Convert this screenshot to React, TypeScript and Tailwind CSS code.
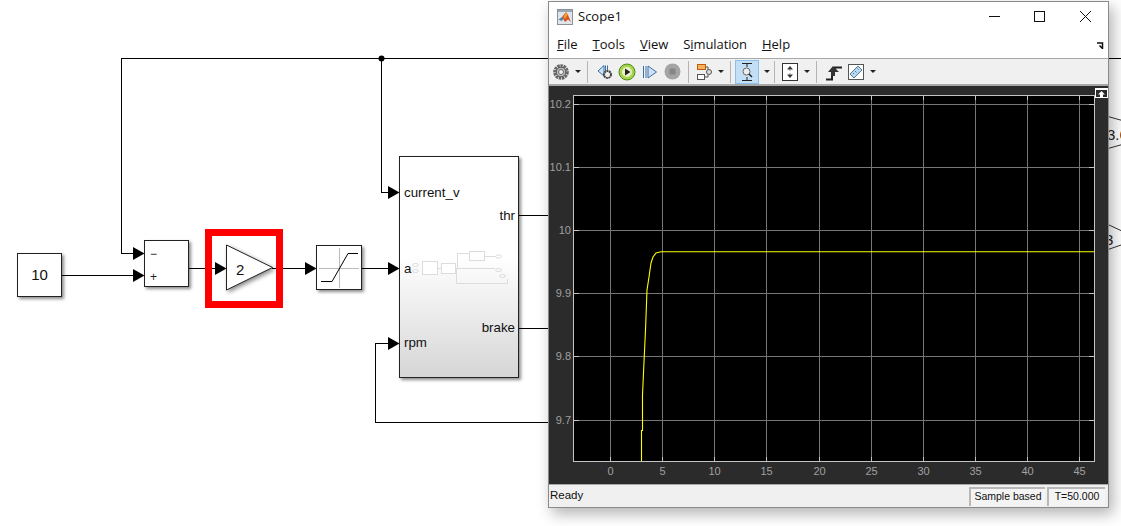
const sans = "font-['Liberation_Sans',Arial,sans-serif]";

const Arrow = ({ x, y }: { x: number; y: number }) => (
  <polygon points={`${x},${y - 6} ${x + 11.5},${y + 0.5} ${x},${y + 7}`} fill="#000" />
);

const Block = ({ className, children }: { className: string; children?: React.ReactNode }) => (
  <div
    className={`absolute border border-[#222] bg-white shadow-[2px_2px_3px_rgba(0,0,0,0.45)] ${sans} ${className}`}
  >
    {children}
  </div>
);

const Wires = () => (
  <svg className="absolute left-0 top-0" width={1121} height={526} fill="none">
    <g stroke="#000" strokeWidth={1} shapeRendering="crispEdges">
      <path d="M1121 58.5H121.5V253.5H134" />
      <path d="M381.5 58.5V192.5H389" />
      <path d="M62 275.5H134" />
      <path d="M189 268.5H216" />
      <path d="M272 268.5H306" />
      <path d="M362 268.5H389" />
      <path d="M519 215.5H548" />
      <path d="M519 328.5H548" />
      <path d="M548 422.5H375.5V343.5H389" />
    </g>
    <circle cx={381.5} cy={58.5} r={3} fill="#000" />
    <Arrow x={133} y={253} />
    <Arrow x={133} y={275} />
    <Arrow x={215} y={268} />
    <Arrow x={305} y={268} />
    <Arrow x={388} y={268} />
    <Arrow x={388} y={192} />
    <Arrow x={388} y={343} />
    <polygon
      points="226.5,245 272.5,267.5 226.5,290"
      fill="#fff"
      stroke="#222"
      style={{ filter: "drop-shadow(2px 2px 2px rgba(0,0,0,.45))" }}
    />
    <polygon points="1108,116.5 1124,121 1124,144 1108,148.5" fill="#fff" stroke="#333" />
    <polygon points="1108,224.5 1124,232 1124,244 1108,249.5" fill="#fff" stroke="#333" />
  </svg>
);

// drawn in page coordinates through the viewBox
const SubsystemThumb = () => (
  <svg className="absolute left-[10px] top-[90px]" width={100} height={40} viewBox="410 247 100 40" fill="none" stroke="#dcdcdc">
    <ellipse cx={415.5} cy={265} rx={3} ry={1.5} />
    <ellipse cx={415.5} cy={271} rx={3} ry={1.5} />
    <rect x={422.5} y={261.5} width={15} height={13} fill="#fff" />
    <path d="M437 268.5H441" />
    <rect x={441.5} y={263.5} width={14} height={10} fill="#fff" />
    <path d="M456 268.5H495M457.5 268V253.5H469M456.5 268V283.5H507.5V279" />
    <rect x={469.5} y={251.5} width={15} height={9} fill="#fff" />
    <path d="M485 256.5H495" />
    <ellipse cx={498.5} cy={256.5} rx={3} ry={1.5} />
    <ellipse cx={498.5} cy={270} rx={3} ry={1.5} />
    <ellipse cx={502.5} cy={276} rx={3} ry={1.5} />
  </svg>
);

const Diagram = () => (
  <>
    <Wires />
    <Block className="left-[17px] top-[253px] flex h-[44px] w-[45px] items-center justify-center text-[15px] text-[#111]">10</Block>
    <Block className="left-[144px] top-[240px] h-[47px] w-[45px] text-[12px] text-[#222]">
      <span className="absolute left-[5px] top-[4px]">−</span>
      <span className="absolute left-[5px] top-[27px]">+</span>
    </Block>
    <div className="absolute left-[205px] top-[229px] h-[79px] w-[78px] border-[7px] border-[#ff0000]" />
    <span className={`absolute left-[236px] top-[259px] text-[15px] text-[#111] ${sans}`}>2</span>
    <Block className="left-[316px] top-[245px] h-[45px] w-[46px]">
      <svg width={44} height={43} fill="none" className="absolute left-0 top-0">
        <path d="M22.5 2V42M2 22.5H42" stroke="#bbb" />
        <path d="M4 35.5H15L31 7.5H41" stroke="#000" />
      </svg>
    </Block>
    <div
      className={`absolute left-[399px] top-[156px] h-[222px] w-[120px] border border-[#222] bg-[linear-gradient(#fff_0%,#fff_45%,#d6d6d6_100%)] text-[13.33px] text-[#111] shadow-[2px_2px_3px_rgba(0,0,0,0.45)] ${sans}`}
    >
      <SubsystemThumb />
      <span className="absolute left-[4px] top-[26px]">current_v</span>
      <span className="absolute right-[3px] top-[49px]">thr</span>
      <span className="absolute left-[4px] top-[102px]">a</span>
      <span className="absolute right-[3px] top-[161px]">brake</span>
      <span className="absolute left-[4px] top-[176px]">rpm</span>
    </div>
    <span className={`absolute left-[1107px] top-[124px] text-[15px] text-[#222] ${sans}`}>3.6</span>
    <span className={`absolute left-[1105px] top-[229px] text-[15px] text-[#222] ${sans}`}>3</span>
  </>
);

const MatlabLogo = () => (
  <svg width={16} height={16} viewBox="0 0 16 16">
    <rect x={0.5} y={0.5} width={15} height={15} fill="#dfe5ea" stroke="#8a9199" />
    <rect x={1} y={1} width={14} height={2} fill="#9aa8b5" />
    <path d="M1.5 10.5L5 8L7 9.5L4.5 12Z" fill="#4a86b8" />
    <path d="M5 8L9 3L11 6L14 13L11 10.5L8 13Z" fill="#d9541e" />
    <path d="M9 3L10.5 6L8 10L6.5 8Z" fill="#f0a030" />
  </svg>
);

const ToolDivider = () => <div className="h-[22px] w-px shrink-0 bg-[#b4b4b4]" />;

const Caret = ({ w }: { w: string }) => (
  <div className={`flex shrink-0 justify-center ${w}`}>
    <svg width={6} height={3}>
      <path d="M0 0H6L3 3Z" fill="#222" />
    </svg>
  </div>
);

const Gear = () => (
  <svg width={16} height={16} viewBox="0 0 16 16" className="shrink-0">
    <circle cx={8} cy={8} r={6.2} fill="none" stroke="#666" strokeWidth={3.2} strokeDasharray="2.4 0.7" />
    <circle cx={8} cy={8} r={4.8} fill="#bdbdbd" stroke="#555" />
    <circle cx={8} cy={8} r={2.5} fill="#f0f0f0" stroke="#666" />
  </svg>
);

const Toolbar = () => (
  <div className="flex h-[27px] shrink-0 items-center border-b-2 border-[#a8a8a8] bg-[#f0f0f0] pl-[4px]">
    <Gear />
    <Caret w="w-[18px]" />
    <ToolDivider />
    <svg width={16} height={16} viewBox="0 0 16 16" className="ml-[9px] shrink-0" fill="none">
      <path d="M7 1.5L1 7L7 12Z" fill="#cfe2f5" stroke="#3b6ea8" />
      <path d="M8.5 1.5V7M10.5 1.5V7" stroke="#3b6ea8" />
      <circle cx={10.5} cy={10.5} r={3.5} fill="#eee" stroke="#444" strokeWidth={2} strokeDasharray="2 0.5" />
    </svg>
    <svg width={18} height={18} viewBox="0 0 18 18" className="ml-[5px] shrink-0">
      <circle cx={9} cy={9} r={8} fill="#a5d34a" stroke="#4f8a22" />
      <circle cx={9} cy={9} r={5} fill="#e8f3c4" />
      <path d="M7 5.5L12.5 9L7 12.5Z" fill="#222" />
    </svg>
    <svg width={14} height={16} viewBox="0 0 14 16" className="ml-[7px] shrink-0" fill="none">
      <path d="M0.5 2V14M3 2V14" stroke="#3b6ea8" />
      <path d="M5 2L13.5 8L5 14Z" fill="#cfe2f5" stroke="#3b6ea8" />
    </svg>
    <svg width={17} height={17} viewBox="0 0 17 17" className="ml-[7px] shrink-0">
      <circle cx={8.5} cy={8.5} r={8} fill="#a4a4a4" />
      <rect x={5.5} y={5.5} width={6} height={6} fill="#868686" />
    </svg>
    <div className="ml-[7px]"><ToolDivider /></div>
    <svg width={16} height={18} viewBox="0 0 16 18" className="ml-[7px] shrink-0" fill="none">
      <rect x={1.5} y={1.5} width={8} height={5} fill="#f5b25a" stroke="#c05a10" />
      <rect x={1.5} y={11.5} width={7} height={5} fill="#fff" stroke="#555" />
      <circle cx={13} cy={9} r={2.5} fill="#ddd" stroke="#555" />
      <path d="M9.5 4H12V6.5M8.5 14H12V11.5" stroke="#555" />
    </svg>
    <Caret w="w-[18px]" />
    <ToolDivider />
    <div className="ml-[4px] flex h-[24px] w-[24px] shrink-0 items-center justify-center border border-[#8cc0ea] bg-[#c3dff5]">
      <svg width={16} height={20} viewBox="0 0 16 20" fill="none" stroke="#222">
        <path d="M3 1.5H13M3 18.5H13M8 2V5M8 15V18" />
        <circle cx={7.5} cy={9.5} r={3.5} fill="#eee" stroke="#666" />
        <path d="M10 12L13 15" strokeWidth={1.5} />
      </svg>
    </div>
    <Caret w="w-[15px]" />
    <ToolDivider />
    <svg width={16} height={18} viewBox="0 0 16 18" className="ml-[7px] shrink-0" fill="none">
      <rect x={0.5} y={0.5} width={15} height={17} fill="#fff" stroke="#333" />
      <path d="M8 3L5 6.5H11ZM8 15L5 11.5H11Z" fill="#333" />
      <path d="M8 6.5V8M8 10V11.5" stroke="#888" />
    </svg>
    <Caret w="w-[18px]" />
    <ToolDivider />
    <svg width={16} height={18} viewBox="0 0 16 18" className="ml-[9px] shrink-0" fill="none">
      <path d="M0 16.5H6V7.5H9V4.5H16" stroke="#222" strokeWidth={2} />
      <path d="M2 9L7 3L13 9H9V13H5V9Z" fill="#333" />
    </svg>
    <svg width={16} height={16} viewBox="0 0 16 16" className="ml-[6px] shrink-0">
      <rect x={0.5} y={0.5} width={15} height={15} fill="#fff" stroke="#555" />
      <path d="M2 10L10 2L14 6L6 14Z" fill="#bcd8ec" stroke="#4f7f9f" />
      <path d="M5 9L6 10M7 7L8.5 8.5M9.5 4.5L10.5 5.5" stroke="#4f7f9f" />
    </svg>
    <Caret w="w-[18px]" />
  </div>
);

const xTicks = [0, 5, 10, 15, 20, 25, 30, 35, 40, 45];
const yTicks = [
  { v: "10.2", y: 104 },
  { v: "10.1", y: 167 },
  { v: "10", y: 230 },
  { v: "9.9", y: 293 },
  { v: "9.8", y: 356 },
  { v: "9.7", y: 420 },
];
const xOf = (t: number) => Math.round(610 + t * 10.43) + 0.5;

// plot svg origin sits at the window's dark panel corner (549, 86)
const Plot = () => (
  <svg className="absolute left-0 top-0" width={559} height={398}>
    <g transform="translate(-549 -86)">
      <rect x={573.5} y={95.5} width={521} height={366} fill="#000" stroke="#c4c4c4" shapeRendering="crispEdges" />
      <g stroke="#767676" shapeRendering="crispEdges">
        {xTicks.map((t) => (
          <line key={t} x1={xOf(t)} x2={xOf(t)} y1={96} y2={461} />
        ))}
        {yTicks.map((t) => (
          <line key={t.v} x1={574} x2={1094} y1={t.y + 0.5} y2={t.y + 0.5} />
        ))}
      </g>
      <g stroke="#c4c4c4" shapeRendering="crispEdges">
        {xTicks.map((t) => (
          <path key={t} d={`M${xOf(t)} 96V100M${xOf(t)} 457V461`} />
        ))}
        {yTicks.map((t) => (
          <path key={t.v} d={`M574 ${t.y + 0.5}H579M1089 ${t.y + 0.5}H1094`} />
        ))}
      </g>
      <path
        d="M641.5 461V430.5H642.5V395L644 362L645.5 330L647 290L649 277L651 263L653 257L656 253L661 251.7H1094"
        fill="none"
        stroke="#ffff00"
        strokeWidth={1.1}
      />
      <g fill="#a0a0a0" fontSize={11} fontFamily="'Liberation Sans',Arial,sans-serif">
        {yTicks.map((t) => (
          <text key={t.v} x={571} y={t.y + 4} textAnchor="end">{t.v}</text>
        ))}
        {xTicks.map((t) => (
          <text key={t} x={xOf(t)} y={475} textAnchor="middle">{t}</text>
        ))}
      </g>
    </g>
  </svg>
);

const Menu = ({ label, hot }: { label: string; hot: number }) => (
  <span>
    {label.slice(0, hot)}
    <span className="underline">{label[hot]}</span>
    {label.slice(hot + 1)}
  </span>
);

const ScopeWindow = () => (
  <div
    className={`absolute left-[548px] top-[1px] flex h-[507px] w-[561px] flex-col border border-[#8a8a8a] bg-white shadow-[4px_6px_14px_rgba(0,0,0,0.3)] ${sans}`}
  >
    <div className="flex h-[30px] shrink-0 items-center pb-[1px] pl-[8px] text-[#111] font-['Open_Sans',sans-serif]">
      <MatlabLogo />
      <span className="ml-[5px] text-[13px]">Scope1</span>
      <div className="ml-auto flex items-center">
        <span className="mr-[34px] h-px w-[11px] bg-[#111]" />
        <span className="mr-[35px] h-[11px] w-[11px] border border-[#111]" />
        <svg width={11} height={11} className="mr-[17px]" stroke="#111">
          <path d="M0 0L11 11M11 0L0 11" />
        </svg>
      </div>
    </div>
    <div className="relative flex h-[27px] shrink-0 items-center gap-[15px] border-b border-[#a8a8a8] pl-[8px] text-[13px] text-[#111] font-['Open_Sans',sans-serif]">
      <Menu label="File" hot={0} />
      <Menu label="Tools" hot={0} />
      <Menu label="View" hot={0} />
      <span className="tracking-[-0.1px]"><Menu label="Simulation" hot={1} /></span>
      <Menu label="Help" hot={0} />
      <svg width={7} height={7} className="absolute right-[4px] top-[10px]" stroke="#111" strokeWidth={1.5} fill="none">
        <path d="M0 1H5.5V6M2.5 3.5L6 7" />
      </svg>
    </div>
    <Toolbar />
    <div className="relative flex-1 bg-[#2b2b2b]">
      <Plot />
      <div className="absolute right-0 top-[2px] flex h-[10px] w-[13px] items-end justify-center border border-t-2 border-white">
        <svg width={7} height={6} fill="#fff"><path d="M3.5 0L7 3.5H5V6H2V3.5H0Z" /></svg>
      </div>
    </div>
    <div className="flex h-[23px] shrink-0 items-center justify-between border-t border-[#a8a8a8] bg-[#f0f0f0] pl-[1px] pr-[3px] text-[10.5px] text-[#111]">
      <span className="text-[11.5px]">Ready</span>
      <div className="flex h-[19px] gap-[2px]">
        <span className="flex w-[76px] items-center justify-center border-l-2 border-t-2 border-[#b8b8b8] bg-[#f4f4f4]">Sample based</span>
        <span className="flex w-[58px] items-center justify-center border-l-2 border-t-2 border-[#b8b8b8] bg-[#f4f4f4]">T=50.000</span>
      </div>
    </div>
  </div>
);

export default function App() {
  return (
    <div className="relative h-[526px] w-[1121px] overflow-hidden bg-white">
      <Diagram />
      <ScopeWindow />
    </div>
  );
}
